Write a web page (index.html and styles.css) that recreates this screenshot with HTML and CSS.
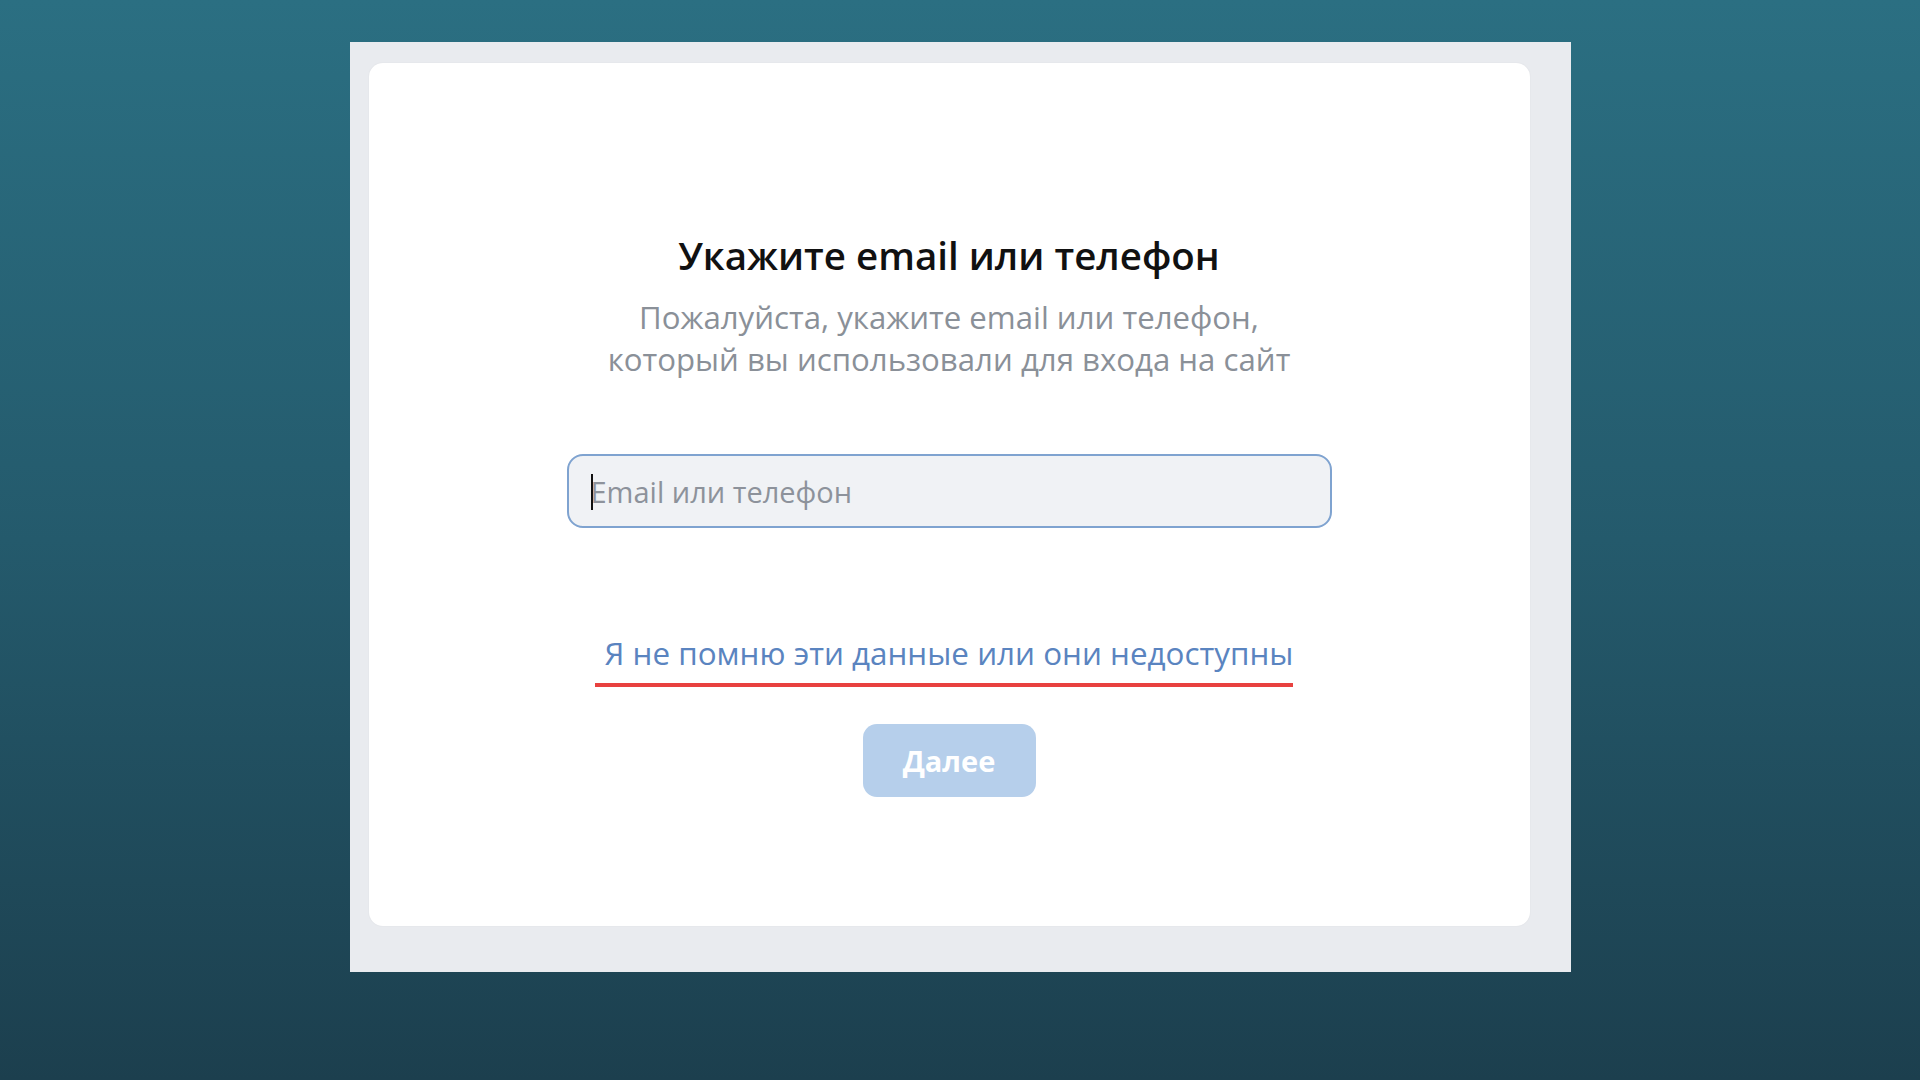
FILE: index.html
```html
<!DOCTYPE html>
<html lang="ru">
<head>
  <meta charset="UTF-8" />
  <meta name="viewport" content="width=device-width, initial-scale=1.0">
  <title>Восстановление доступа</title>
  <link rel="stylesheet" href="styles.css">
</head>
<body>

  <!-- рамка окна -->
  <div class="frame">
    <div class="card">
      <h1 class="title">Укажите email или телефон</h1>
      <p class="subtitle">Пожалуйста, укажите email или телефон,<br>который вы использовали для входа на сайт</p>

      <div class="field">
        <span class="caret"></span>
        <input type="text" placeholder="Email или телефон" />
      </div>

      <a href="#" class="forgot">Я не помню эти данные или они недоступны</a>

      <button class="next" disabled>Далее</button>
    </div>
  </div>

</body>
</html>
```

FILE: styles.css
```css
/* базовые стили */
* {
  box-sizing: border-box;
}
html, body {
  height: 100%;
}
body {
  margin: 0;
  font-family: "Open Sans", "Noto Sans", sans-serif;
  background: linear-gradient(180deg, #2b6f82 0%, #245a6c 50%, #1c3f4e 100%);
  overflow: hidden;
}

/* серая рамка вокруг карточки */
.frame {
  width: 1221px;
  height: 930px;
  margin: 42px auto 0 auto;
  background-color: #e9ebef;
  padding: 21px 41px 46px 19px;
}

.card {
  height: 100%;
  background-color: #fff;
  border-radius: 14px;
  box-shadow: 0 0 2px rgba(0, 0, 0, 0.06);
  display: flex;
  flex-direction: column;
  align-items: center;
  padding-top: 168px;
}

.title {
  margin: 0;
  font-size: 38.5px;
  font-weight: 600;
  color: #111;
  line-height: 48px;
}

.subtitle {
  margin: 17px 0 0 0;
  font-size: 31.2px;
  line-height: 42px;
  color: #8a9098;
  text-align: center;
}

/* поле ввода */
.field {
  position: relative;
  width: 765px;
  height: 74px;
  margin-top: 74px;
}
.field input {
  width: 100%;
  height: 100%;
  border: 2px solid #7fa3d0;
  border-radius: 16px;
  background-color: #f0f2f5;
  padding: 0 22px;
  font-family: inherit;
  font-size: 29px;
  color: #333;
  outline: none;
}
.field input::placeholder {
  color: #8d929b;
}
.caret {
  position: absolute;
  left: 24px;
  top: 20px;
  width: 2px;
  height: 36px;
  background-color: #111;
}

/* ссылка, подчёркнута красным */
.forgot {
  margin: 105px 0 0 -10px;
  font-size: 31.4px;
  color: #5a84c0;
  text-decoration: none;
  padding: 0 0 10px 10px;
  border-bottom: 4px solid #e8413f;
  line-height: 40px;
}

/* кнопка */
.next {
  margin-top: 37px;
  width: 173px;
  height: 73px;
  border: none;
  border-radius: 14px;
  background-color: #b6cfeb;
  color: #fff;
  font-family: inherit;
  font-size: 29px;
  font-weight: 700;
}
```
